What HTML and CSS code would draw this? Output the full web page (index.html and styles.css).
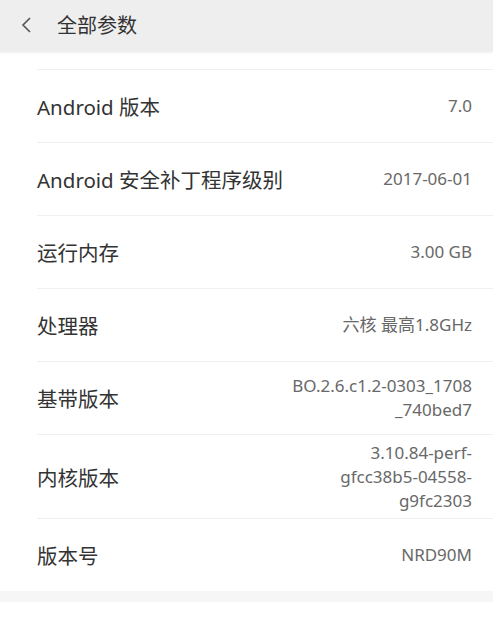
FILE: index.html
```html
<!DOCTYPE html>
<html>
<head>
  <meta charset="utf-8">
  <title>全部参数</title>
  <link rel="stylesheet" href="styles.css">
</head>
<body>
  <div class="header">
    <svg class="back" width="14" height="20" viewBox="0 0 14 20">
      <polyline points="11,3 4,10 11,17" fill="none" stroke="#555" stroke-width="1.6"/>
    </svg>
    <h1>全部参数</h1>
  </div>

  <div class="list">
    <div class="cut"></div>
    <div class="row">
      <span class="label">Android 版本</span>
      <span class="value">7.0</span>
    </div>
    <div class="row">
      <span class="label">Android 安全补丁程序级别</span>
      <span class="value">2017-06-01</span>
    </div>
    <div class="row">
      <span class="label">运行内存</span>
      <span class="value">3.00 GB</span>
    </div>
    <div class="row">
      <span class="label">处理器</span>
      <span class="value">六核 最高1.8GHz</span>
    </div>
    <div class="row">
      <span class="label">基带版本</span>
      <span class="value">BO.2.6.c1.2-0303_1708<br>_740bed7</span>
    </div>
    <div class="row tall">
      <span class="label">内核版本</span>
      <span class="value">3.10.84-perf-<br>gfcc38b5-04558-<br>g9fc2303</span>
    </div>
    <div class="row">
      <span class="label">版本号</span>
      <span class="value">NRD90M</span>
    </div>
  </div>
  <div class="band"></div>
</body>
</html>
```

FILE: styles.css
```css
* {
  box-sizing: border-box;
  margin: 0;
  padding: 0;
}

body {
  font-family: "Noto Sans", "Noto Sans CJK SC", sans-serif;
  background: #fff;
  width: 493px;
  height: 622px;
  overflow: hidden;
}

.header {
  height: 52px;
  background: #eeeeee;
  display: flex;
  align-items: center;
  padding-left: 19px;
  box-shadow: 0 1px 2px rgba(0,0,0,0.06);
  position: relative;
}

.back {
  margin-right: 24px;
  margin-top: -2px;
}

.header h1 {
  font-size: 20px;
  font-weight: 400;
  color: #333;
  margin-top: -4px;
}

.list {
  margin-left: 37px;
}

.cut {
  height: 17px;
}

.row {
  height: 73px;
  border-top: 1px solid #efefef;
  display: flex;
  align-items: center;
  justify-content: space-between;
  padding-right: 21px;
}

.row.tall {
  height: 84px;
}

.label {
  font-size: 20.5px;
  line-height: 28px;
  padding-top: 2px;
  color: #333;
  white-space: nowrap;
}

.value {
  font-size: 17px;
  line-height: 24px;
  color: #686868;
  text-align: right;
}

.band {
  height: 11px;
  background: #f6f6f6;
}
```
